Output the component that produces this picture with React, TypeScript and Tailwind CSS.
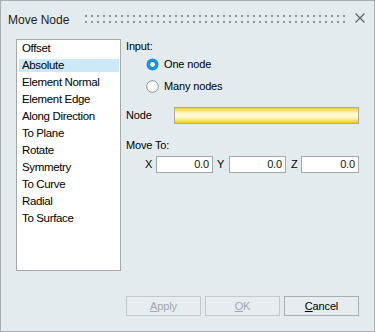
import * as React from "react";

const methods = [
  "Offset",
  "Absolute",
  "Element Normal",
  "Element Edge",
  "Along Direction",
  "To Plane",
  "Rotate",
  "Symmetry",
  "To Curve",
  "Radial",
  "To Surface",
];

function Grip() {
  const cols = Array.from({ length: 44 }, (_, i) => i);
  return (
    <svg width="262" height="8" className="mb-[2px] ml-[16px] shrink-0">
      {cols.map((i) => (
        <React.Fragment key={i}>
          <rect x={i * 6} y={0} width={2} height={2} fill="#8d9397" />
          <rect x={i * 6} y={6} width={2} height={2} fill="#8d9397" />
        </React.Fragment>
      ))}
    </svg>
  );
}

function Radio({ checked, label }: { checked?: boolean; label: string }) {
  return (
    <div className="flex h-[22px] items-center pl-[20px]">
      <svg width="13" height="13" viewBox="0 0 13 13" className="shrink-0">
        {checked ? (
          <>
            <circle cx="6.5" cy="6.5" r="6" fill="#1592db" />
            <circle cx="6.5" cy="6.5" r="2.4" fill="#ffffff" />
          </>
        ) : (
          <circle cx="6.5" cy="6.5" r="5.8" fill="#ffffff" stroke="#8a8e91" strokeWidth="1" />
        )}
      </svg>
      <span className="ml-[5px]">{label}</span>
    </div>
  );
}

function NumField({ value }: { value: string }) {
  return (
    <div className="h-[17px] flex-1 border border-[#a3a7aa] bg-white pr-[3px] text-right leading-[15px] text-[#111]">
      {value}
    </div>
  );
}

export default function App() {
  const selected = "Absolute";

  return (
    <div
      className="flex h-[332px] w-[375px] flex-col border border-[#a7aeb2] bg-[#e4ebef] text-[11px] tracking-[-0.15px] text-black"
      style={{ fontFamily: '"Liberation Sans", Arial, sans-serif' }}
    >
      {/* title bar */}
      <div className="flex h-[38px] shrink-0 items-center pl-[7px] pr-[9px]">
        <span className="text-[12px] leading-[14px] tracking-normal text-[#1b1b1b]">Move Node</span>
        <Grip />
        <svg width="10" height="10" viewBox="0 0 10 10" className="mb-[4px] ml-auto">
          <path d="M0.5 0.5 L9.5 9.5 M9.5 0.5 L0.5 9.5" stroke="#555b5f" strokeWidth="1.1" />
        </svg>
      </div>

      {/* body */}
      <div className="flex h-[232px] shrink-0 pl-[15px] pr-[15px]">
        <div className="flex h-[232px] w-[105px] shrink-0 flex-col gap-[4px] border border-[#a4a8ab] bg-white pt-[2px]">
          {methods.map((m) => (
            <div
              key={m}
              className={
                "ml-[2px] mr-[1px] h-[13px] shrink-0 pl-[3px] text-[11.5px] leading-[13px] tracking-[-0.35px] " +
                (m === selected ? "bg-[#cde8f7]" : "")
              }
            >
              {m}
            </div>
          ))}
        </div>

        <div className="ml-[5px] flex flex-1 flex-col">
          <div className="h-[14px] leading-[14px]">Input:</div>
          <Radio checked label="One node" />
          <Radio label="Many nodes" />

          <div className="mt-[10px] flex h-[17px] items-center">
            <span className="w-[48px] shrink-0">Node</span>
            <div className="h-[17px] flex-1 border border-[#a9a9a0] bg-[linear-gradient(to_bottom,#f5d232_0%,#fff8c8_35%,#fffbd8_50%,#fff2a6_70%,#f2ca14_100%)]" />
          </div>

          <div className="mt-[14px] h-[14px] leading-[14px]">Move To:</div>

          <div className="mt-[4px] flex h-[17px] items-center">
            <span className="w-[30px] shrink-0 pl-[19px]">X</span>
            <NumField value="0.0" />
            <span className="w-[16px] shrink-0 pl-[4px]">Y</span>
            <NumField value="0.0" />
            <span className="w-[15px] shrink-0 pl-[5px]">Z</span>
            <div className="flex w-[58px]">
              <NumField value="0.0" />
            </div>
          </div>
        </div>
      </div>

      {/* buttons */}
      <div className="mt-[25px] flex justify-end gap-[4px] pr-[15px]">
        <button className="h-[20px] w-[75px] border border-[#c3c8cb] bg-[#e6ecef] leading-[18px] text-[#a2a6a9]">
          <u>A</u>pply
        </button>
        <button className="h-[20px] w-[75px] border border-[#c3c8cb] bg-[#e6ecef] leading-[18px] text-[#a2a6a9]">
          <u>O</u>K
        </button>
        <button className="h-[20px] w-[75px] border border-[#a9aeb1] bg-[#e6ecef] leading-[18px] text-black">
          <u>C</u>ancel
        </button>
      </div>
    </div>
  );
}
